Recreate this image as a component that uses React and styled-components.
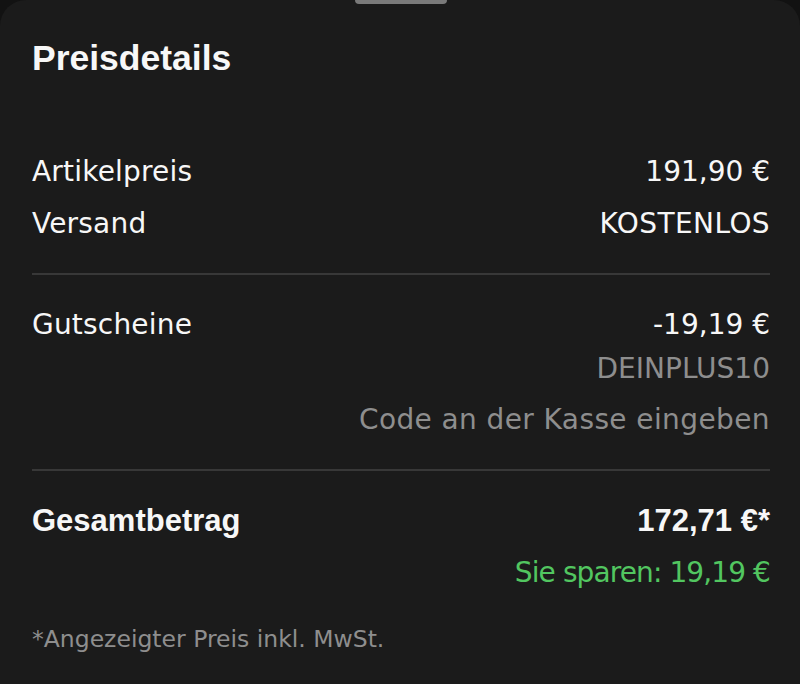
import React from 'react';
import styled, { createGlobalStyle } from 'styled-components';

const GlobalStyle = createGlobalStyle`
  html, body {
    margin: 0;
    background: #121212;
  }
  * {
    box-sizing: border-box;
  }
`;

const Sheet = styled.div`
  min-height: 684px;
  background: #1b1b1b;
  border-radius: 26px 26px 0 0;
  padding: 0 30px 0 32px;
  display: flex;
  flex-direction: column;
  color: #f7f7f7;
  font-family: "DejaVu Sans", "Liberation Sans", sans-serif;
`;

const Handle = styled.div`
  width: 92px;
  height: 4px;
  margin: 0 auto;
  background: #7a7a7a;
  border-radius: 0 0 4px 4px;
`;

const Title = styled.h2`
  margin: 34px 0 68px;
  font-family: "Liberation Sans", Arial, sans-serif;
  font-weight: 700;
  font-size: 35.5px;
  line-height: 40px;
  color: #f7f7f7;
`;

const Section = styled.div`
  display: flex;
  flex-direction: column;
`;

const Row = styled.div`
  display: flex;
  justify-content: space-between;
  align-items: flex-start;
`;

const Label = styled.span`
  font-family: ${p => (p.$bold ? '"Liberation Sans", Arial, sans-serif' : '"DejaVu Sans", sans-serif')};
  font-weight: ${p => (p.$bold ? 700 : 400)};
  font-size: ${p => (p.$bold ? '31px' : '28px')};
  letter-spacing: ${p => (p.$bold ? 0 : 0.2)}px;
  line-height: 52px;
`;

const tones = {
  normal: '#f7f7f7',
  muted: '#8e8e8e',
  green: '#52c660',
};

const Value = styled.span`
  font-family: ${p => (p.$bold ? '"Liberation Sans", Arial, sans-serif' : '"DejaVu Sans", sans-serif')};
  font-weight: ${p => (p.$bold ? 700 : 400)};
  font-size: ${p => (p.$bold ? '31px' : '28px')};
  line-height: ${p => p.$lh || 52}px;
  margin-top: ${p => p.$mt || 0}px;
  letter-spacing: ${p => p.$ls || 0}px;
  color: ${p => tones[p.$tone || 'normal']};
  white-space: nowrap;
`;

const Stack = styled.div`
  display: flex;
  flex-direction: column;
  align-items: flex-end;
`;

const Divider = styled.hr`
  border: none;
  height: 2px;
  background: #383838;
  margin: 23px 0 24px;
`;

const Footnote = styled.p`
  margin: 22px 0 0;
  font-size: 23.5px;
  line-height: 36px;
  color: #8e8e8e;
`;

export default function App() {
  return (
    <>
      <GlobalStyle />
      <Sheet>
        <Handle />
        <Title>Preisdetails</Title>

        <Section>
          <Row>
            <Label>Artikelpreis</Label>
            <Value>191,90 €</Value>
          </Row>
          <Row>
            <Label>Versand</Label>
            <Value $ls={0.4}>KOSTENLOS</Value>
          </Row>
        </Section>

        <Divider />

        <Section>
          <Row>
            <Label>Gutscheine</Label>
            <Stack>
              <Value>-19,19 €</Value>
              <Value $tone="muted" $lh={36}>DEINPLUS10</Value>
              <Value $tone="muted" $mt={7} $ls={0.4}>Code an der Kasse eingeben</Value>
            </Stack>
          </Row>
        </Section>

        <Divider />

        <Section>
          <Row>
            <Label $bold>Gesamtbetrag</Label>
            <Value $bold>172,71 €*</Value>
          </Row>
          <Row>
            <span />
            <Value $tone="green" $ls={-0.9}>Sie sparen: 19,19 €</Value>
          </Row>
        </Section>

        <Footnote>*Angezeigter Preis inkl. MwSt.</Footnote>
      </Sheet>
    </>
  );
}
